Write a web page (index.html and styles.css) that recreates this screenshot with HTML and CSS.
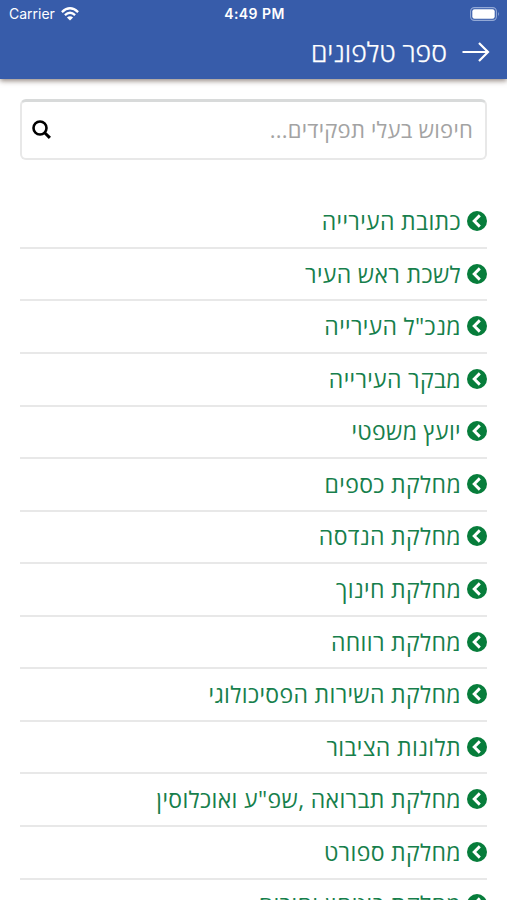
FILE: index.html
```html
<!DOCTYPE html>
<html lang="he" dir="rtl">
<head>
    <meta charset="UTF-8">
    <meta name="viewport" content="width=device-width, initial-scale=1.0">
    <title>ספר טלפונים</title>
    <link rel="stylesheet" href="styles.css">
</head>
<body>

<svg class="sprite" aria-hidden="true">
    <symbol id="chevron" viewBox="0 0 20 20">
        <circle cx="10" cy="10" r="10" fill="#077d3b"/>
        <path d="M12.8 4.4L7.2 10l5.6 5.6" fill="none" stroke="#fff" stroke-width="2.9"/>
    </symbol>
</svg>

<header class="header">
    <div class="status-bar" dir="ltr">
        <div class="carrier">
            <span>Carrier</span>
            <svg class="wifi" viewBox="0 0 18 14" fill="none" stroke="#fff" stroke-width="2.3">
                <path d="M0.9 5.1Q9 -2.5 17.1 5.1"/>
                <path d="M3.9 8.2Q9 3.4 14.1 8.2"/>
                <path d="M9 13.6L5.9 10.6Q9 8 12.1 10.6z" fill="#fff" stroke="none"/>
            </svg>
        </div>
        <span class="time">4:49 PM</span>
        <div class="battery-wrap">
            <svg class="battery" viewBox="0 0 30 14">
                <rect x="0.6" y="0.6" width="25.8" height="12.8" rx="3.8" fill="none" stroke="#93a9d6" stroke-width="1.1"/>
                <rect x="2.3" y="2.3" width="22.4" height="9.4" rx="2.2" fill="#fff"/>
                <path d="M28 4.8q1.8 2.2 0 4.4z" fill="#93a9d6"/>
            </svg>
        </div>
    </div>
    <div class="title-bar">
        <svg class="back" viewBox="0 0 28 20" fill="none" stroke="#fff" stroke-width="2.2">
            <path d="M0.5 10H26M17 1l9 9-9 9"/>
        </svg>
        <h1>ספר טלפונים</h1>
    </div>
</header>

<main class="content">
    <form class="search">
        <input type="text" placeholder="חיפוש בעלי תפקידים...">
        <svg class="search-icon" viewBox="0 0 19 19" fill="none" stroke="#000">
            <circle cx="8" cy="8" r="6.5" stroke-width="2.6"/>
            <path d="M12.7 12.7l5.2 5.2" stroke-width="3"/>
        </svg>
    </form>

    <ul class="list">
        <li><svg><use href="#chevron"/></svg><span>כתובת העירייה</span></li>
        <li><svg><use href="#chevron"/></svg><span>לשכת ראש העיר</span></li>
        <li><svg><use href="#chevron"/></svg><span>מנכ"ל העירייה</span></li>
        <li><svg><use href="#chevron"/></svg><span>מבקר העירייה</span></li>
        <li><svg><use href="#chevron"/></svg><span>יועץ משפטי</span></li>
        <li><svg><use href="#chevron"/></svg><span>מחלקת כספים</span></li>
        <li><svg><use href="#chevron"/></svg><span>מחלקת הנדסה</span></li>
        <li><svg><use href="#chevron"/></svg><span>מחלקת חינוך</span></li>
        <li><svg><use href="#chevron"/></svg><span>מחלקת רווחה</span></li>
        <li><svg><use href="#chevron"/></svg><span>מחלקת השירות הפסיכולוגי</span></li>
        <li><svg><use href="#chevron"/></svg><span>תלונות הציבור</span></li>
        <li><svg><use href="#chevron"/></svg><span>מחלקת תברואה ,שפ"ע ואוכלוסין</span></li>
        <li><svg><use href="#chevron"/></svg><span>מחלקת ספורט</span></li>
        <li><svg><use href="#chevron"/></svg><span>מחלקת ביטחון וחירום</span></li>
    </ul>
</main>

</body>
</html>
```
FILE: styles.css
```css
* {
    box-sizing: border-box;
    margin: 0;
    padding: 0;
}

body {
    font-family: 'Open Sans', sans-serif;
    background-color: #fff;
    height: 100vh;
    overflow: hidden;
}

.sprite {
    display: none;
}

.header {
    height: 79px;
    background-color: #375caa;
    color: #fff;
    box-shadow: 0 2px 5px rgba(60, 40, 30, 0.55);
}

.status-bar {
    display: grid;
    grid-template-columns: 1fr auto 1fr;
    align-items: center;
    height: 27px;
    padding: 0 7px 0 9px;
    font-family: Inter, sans-serif;
    font-size: 14px;
}

.carrier {
    display: flex;
    align-items: center;
    gap: 6px;
}

.wifi {
    width: 18px;
    height: 14px;
}

.time {
    font-weight: 600;
    letter-spacing: 0.45px;
}

.battery-wrap {
    display: flex;
    justify-content: flex-end;
}

.battery {
    width: 30px;
    height: 14px;
}

.title-bar {
    display: flex;
    align-items: center;
    gap: 15px;
    height: 49px;
    padding: 0 17px;
}

.back {
    width: 28px;
    height: 20px;
}

h1 {
    font-size: 26.6px;
    font-weight: 300;
    line-height: 48px;
    -webkit-text-stroke: 0.25px #fff;
}

.content {
    padding: 20px 20px 0;
}

.search {
    display: flex;
    align-items: center;
    height: 61px;
    padding: 0 12px 2px 10px;
    border: 2px solid #e8e8e8;
    border-top: 3px solid #d8dada;
    border-radius: 6px;
}

.search input {
    flex: 1;
    min-width: 0;
    border: none;
    outline: none;
    background: none;
    font-family: inherit;
    font-size: 22px;
    letter-spacing: 0.25px;
}

.search input::placeholder {
    color: #a3a3a3;
}

.search-icon {
    width: 19px;
    height: 19px;
}

.list {
    margin-top: 36.4px;
    list-style: none;
}

.list li {
    display: flex;
    align-items: center;
    gap: 6px;
    height: 52.55px;
    padding-bottom: 1px;
    border-bottom: 2px solid #e8e8e8;
    color: #177f4c;
    font-size: 23px;
    letter-spacing: 0.35px;
    line-height: 30px;
    white-space: nowrap;
}

.list svg {
    width: 20px;
    height: 20px;
}
```
